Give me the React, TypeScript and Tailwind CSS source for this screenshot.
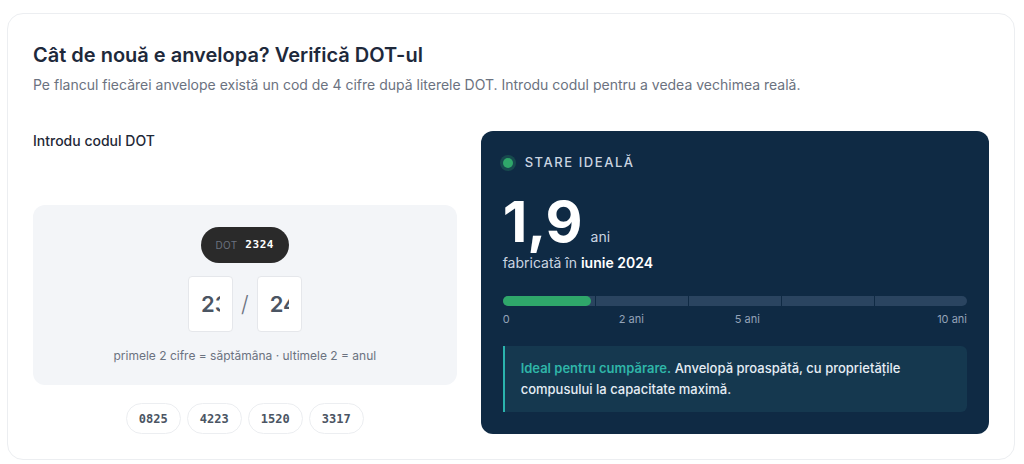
import React from 'react';

const font = { fontFamily: 'Inter, "Noto Sans", sans-serif' };

const samples = ['0825', '4223', '1520', '3317'];

const DotInput: React.FC = () => (
  <div className="flex flex-col">
    <div className="text-[14px] font-medium text-[#1f2937] leading-5">Introdu codul DOT</div>
    <div className="mt-[54px] bg-[#f3f5f8] rounded-xl h-[180px] flex flex-col items-center pt-[22px]">
      <div className="h-9 w-[88px] rounded-full bg-[#2a2a2a] flex items-center justify-center gap-2">
        <span className="text-[10px] text-[#6b7280] tracking-wide">DOT</span>
        <span className="text-[11px] font-bold text-white tracking-wider font-['DejaVu_Sans_Mono',monospace]">2324</span>
      </div>
      <div className="mt-[13px] flex items-center gap-[8px]">
        <input
          readOnly
          value="23"
          className="w-[45px] h-[56px] bg-white border border-[#e5e7eb] rounded-[4px] px-3 text-[22px] font-semibold text-[#4b5563] outline-none"
        />
        <span className="text-[22px] text-[#6b7280] font-light">/</span>
        <input
          readOnly
          value="24"
          className="w-[45px] h-[56px] bg-white border border-[#e5e7eb] rounded-[4px] px-3 text-[22px] font-semibold text-[#4b5563] outline-none"
        />
      </div>
      <div className="mt-[15px] text-[12px] text-[#6b7280]">primele 2 cifre = săptămâna · ultimele 2 = anul</div>
    </div>
    <div className="mt-[18px] flex justify-center gap-[6px]">
      {samples.map(s => (
        <button
          key={s}
          className="h-[31px] w-[55px] rounded-full bg-white border border-[#eceef1] text-[12px] font-bold text-[#4b5563] font-['DejaVu_Sans_Mono',monospace]"
        >
          {s}
        </button>
      ))}
    </div>
  </div>
);

const AgePanel: React.FC = () => {
  const age = 1.9;
  return (
    <div className="bg-[#0f2a44] rounded-xl px-[22px] pt-[22px] pb-[22px] text-white">
      <div className="flex items-center gap-3">
        <span className="w-[10px] h-[10px] rounded-full bg-[#2fa76a] ring-[3px] ring-[#2fa76a]/25"></span>
        <span className="text-[13px] font-medium tracking-[0.12em] text-[#cbd5e1]">STARE IDEALĂ</span>
      </div>
      <div className="mt-[22px] flex items-baseline gap-2">
        <span className="text-[57px] font-bold leading-[54px]">1,9</span>
        <span className="text-[14px] text-[#cbd5e1]">ani</span>
      </div>
      <div className="mt-[3px] text-[14px] text-[#cbd5e1]">
        fabricată în <span className="font-semibold text-white">iunie 2024</span>
      </div>
      <div className="mt-[23px] relative h-[10px]">
        <div className="flex h-full gap-px rounded-full overflow-hidden">
          {[0, 1, 2, 3, 4].map(i => (
            <div key={i} className="flex-1 bg-[#2a4460]"></div>
          ))}
        </div>
        <div className="absolute left-0 top-0 h-full rounded-full bg-[#2fa76a]" style={{ width: `${(age / 10) * 100}%` }}></div>
      </div>
      <div className="mt-[5px] grid grid-cols-4 text-[11px] text-[#94a3b8]">
        <span>0</span>
        <span>2 ani</span>
        <span>5 ani</span>
        <span className="text-right">10 ani</span>
      </div>
      <div className="mt-[19px] bg-[#15384f] border-l-2 border-[#2bb3ad] rounded-r-md pl-[16px] pr-4 py-[12px] text-[13px] leading-[21px] font-medium text-[#e5edf5]">
        <span className="text-[#2fb5a8] font-semibold">Ideal pentru cumpărare.</span> Anvelopă proaspătă, cu proprietățile compusului la capacitate maximă.
      </div>
    </div>
  );
};

export default function App() {
  return (
    <div className="w-[1024px] h-[464px] bg-white pt-[13px] px-[7px]" style={font}>
      <div className="w-[1008px] h-[447px] border border-[#eceef1] rounded-2xl px-[25px] pt-[27px]">
        <h2 className="text-[20px] font-semibold text-[#1e293b] leading-7">Cât de nouă e anvelopa? Verifică DOT-ul</h2>
        <p className="mt-[6px] text-[14px] text-[#6b7280] leading-5">
          Pe flancul fiecărei anvelope există un cod de 4 cifre după literele DOT. Introdu codul pentru a vedea vechimea reală.
        </p>
        <div className="mt-[36px] grid grid-cols-[5fr_6fr] gap-6 items-start">
          <DotInput />
          <AgePanel />
        </div>
      </div>
    </div>
  );
}
